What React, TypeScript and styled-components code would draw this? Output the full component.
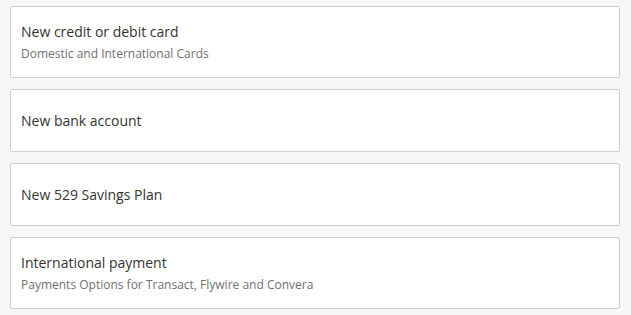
import React from "react";
import styled, { createGlobalStyle } from "styled-components";

const Global = createGlobalStyle`
  html, body { margin: 0; padding: 0; background: #f7f7f7; }
  body { font-family: "Open Sans", "Liberation Sans", sans-serif; }
  * { box-sizing: border-box; }
`;

const List = styled.div`
  display: flex;
  flex-direction: column;
  gap: 11px;
  padding: 6px 11px 6px 10px;
`;

const Card = styled.div`
  display: flex;
  flex-direction: column;
  justify-content: center;
  min-height: 63px;
  padding: 15px 10px 14px;
  background: #fff;
  border: 1px solid #cfcfcf;
  border-radius: 2px;
  cursor: pointer;
`;

const Title = styled.div`
  font-size: 14px;
  line-height: 20px;
  color: #333;
`;

const Subtitle = styled.div`
  font-size: 12px;
  line-height: 18px;
  margin-top: 3px;
  color: #707070;
`;

const options = [
  { title: "New credit or debit card", sub: "Domestic and International Cards" },
  { title: "New bank account" },
  { title: "New 529 Savings Plan" },
  { title: "International payment", sub: "Payments Options for Transact, Flywire and Convera" },
];

export default function App() {
  return (
    <>
      <Global />
      <List>
        {options.map((o) => (
          <Card key={o.title}>
            <Title>{o.title}</Title>
            {o.sub && <Subtitle>{o.sub}</Subtitle>}
          </Card>
        ))}
      </List>
    </>
  );
}
